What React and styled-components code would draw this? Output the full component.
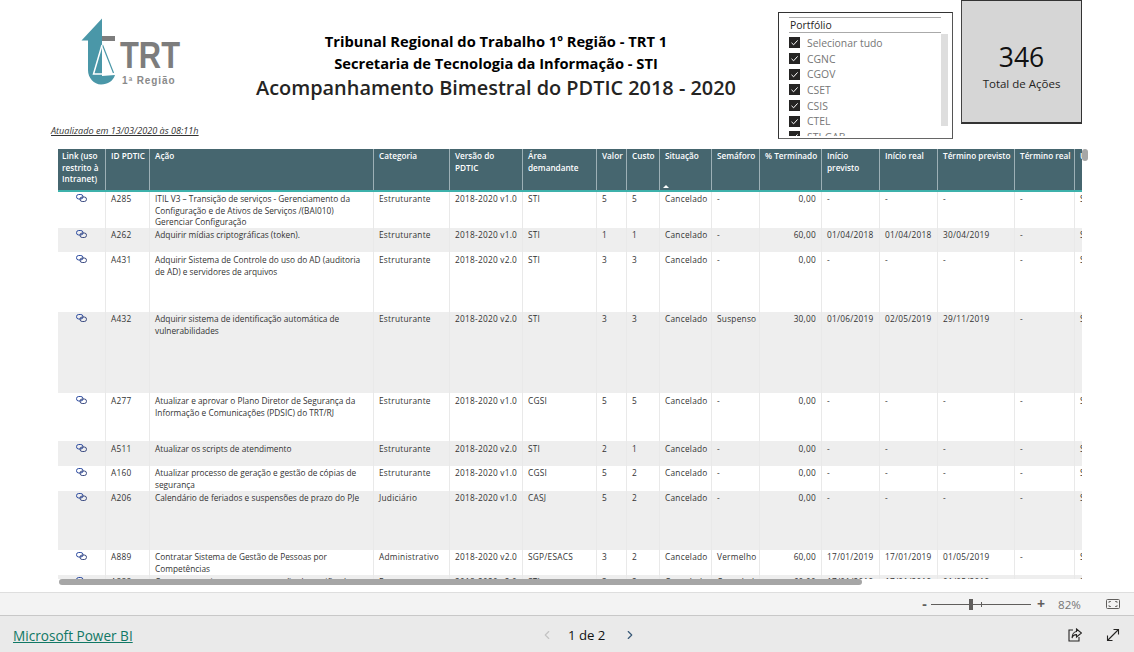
import React from "react";
import styled, { createGlobalStyle } from "styled-components";
import { ChevronLeft, ChevronRight } from "lucide-react";

const FONT = `"Open Sans", "Noto Sans", "Liberation Sans", sans-serif`;
const COLUMNS = "48px 44px 224px 76px 73px 74px 30px 33px 52px 48px 62px 58px 58px 77px 60px 7px";

const Global = createGlobalStyle`
  html, body { margin: 0; padding: 0; height: 100%; overflow: hidden; background: #fff; }
  body { font-family: ${FONT}; }
  * { box-sizing: border-box; }
`;

const Page = styled.div`
  width: 1134px;
  height: 652px;
  display: flex;
  flex-direction: column;
`;
const Report = styled.main`
  position: relative;
  height: 592px;
  flex: none;
`;
const TopRow = styled.header`
  display: flex;
  align-items: flex-start;
  height: 149px;
  padding-left: 51px;
`;
const LeftColumn = styled.div`
  width: 727px;
  flex: none;
`;
const Brand = styled.div`
  display: flex;
  align-items: flex-start;
  height: 124px;
  padding: 18px 0 0 29px;
`;
const LogoBox = styled.svg`
  width: 102px;
  height: 68px;
  flex: none;
`;
const Titles = styled.div`
  width: 480px;
  margin: 12px 0 0 74px;
  text-align: center;
`;
const TitleLine = styled.div`
  font-size: 14.7px;
  line-height: 22px;
  font-weight: 700;
  color: #000;
  white-space: nowrap;
`;
const MainTitle = styled.h1`
  margin: 0;
  font-size: 19.9px;
  line-height: 28px;
  font-weight: 600;
  color: #252423;
  white-space: nowrap;
`;
const Updated = styled.div`
  font-size: 9.1px;
  line-height: 14px;
  font-style: italic;
  color: #333;
  text-decoration: underline;
`;
const Slicer = styled.section`
  position: relative;
  width: 175px;
  height: 127px;
  margin-top: 12px;
  flex: none;
  border: 1px solid #333;
  border-bottom-color: #666;
  border-right-color: #555;
  padding: 4px 11px 0 10px;
  overflow: hidden;
`;
const SlicerTitle = styled.div`
  border-top: 1px solid #aaa;
  border-bottom: 1px solid #aaa;
  height: 16px;
  font-size: 10.4px;
  line-height: 14px;
  color: #252423;
  padding-left: 1px;
`;
const SlicerList = styled.ul`
  list-style: none;
  margin: 2px 0 0;
  padding: 0;
  height: 101px;
  overflow: hidden;
`;
const SlicerItem = styled.li`
  display: flex;
  align-items: center;
  gap: 7px;
  height: 15.7px;
  font-size: 10.4px;
  color: #767676;
  white-space: nowrap;
`;
const Check = styled.svg`
  width: 11px;
  height: 11px;
  flex: none;
`;
const SlicerScroll = styled.div`
  position: absolute;
  top: 21px;
  right: 4px;
  width: 7px;
  height: 92px;
  background: #dedede;
`;
const Card = styled.section`
  width: 121px;
  height: 124px;
  margin-left: 8px;
  flex: none;
  background: #d6d6d6;
  border: 1px solid #333;
  border-bottom-width: 2px;
  border-left-color: #444;
  display: flex;
  flex-direction: column;
  align-items: center;
  justify-content: center;
  padding-top: 8px;
`;
const CardValue = styled.div`
  font-size: 26.5px;
  line-height: 36px;
  color: #111;
`;
const CardLabel = styled.div`
  font-size: 11.5px;
  line-height: 18px;
  color: #252423;
`;
const TableWrap = styled.div`
  margin-left: 58px;
  width: 1024px;
  height: 430px;
  overflow: hidden;
`;
const Row = styled.div`
  display: grid;
  grid-template-columns: ${COLUMNS};
  height: ${(p) => p.$h}px;
  background: ${(p) => (p.$alt ? "#eeeeee" : "#ffffff")};
  && > * { padding-top: ${(p) => p.$pad}px; }
`;
const HeadRow = styled(Row)`
  background: #46666f;
  border-bottom: 2px solid #3db1ab;
`;
const HeadCell = styled.div`
  position: relative;
  padding: 1px 0 0 5px;
  border-right: 1px solid #9db0b6;
  font-size: 8.2px;
  line-height: 11.5px;
  font-weight: 600;
  color: #fff;
  overflow: hidden;
  white-space: pre-line;
  &:first-child { padding-left: 4px; }
  &:last-child { border-right: 0; }
`;
const SortMark = styled.span`
  position: absolute;
  left: 3px;
  bottom: 2px;
  border-left: 3px solid transparent;
  border-right: 3px solid transparent;
  border-bottom: 3px solid #fff;
`;
const Cell = styled.div`
  padding: 1px 5px 0 5px;
  border-right: 1px solid #e9e9e9;
  font-size: 8.3px;
  line-height: 11.7px;
  color: #333;
  overflow: hidden;
  letter-spacing: ${(p) => (p.$text ? "0" : "0.25px")};
  text-align: ${(p) => (p.$right ? "right" : "left")};
  white-space: ${(p) => (p.$nowrap ? "nowrap" : "normal")};
  &:last-child { border-right: 0; }
`;
const LinkCell = styled(Cell)`
  display: flex;
  justify-content: center;
  padding: 1px 0 0 0;
`;
const LinkIcon = styled.svg`
  width: 11px;
  height: 8px;
  margin-top: 1px;
`;
const HScroll = styled.div`
  position: absolute;
  left: 59px;
  top: 579px;
  width: 803px;
  height: 6px;
  border-radius: 3px;
  background: #a6a6a6;
`;
const VScroll = styled.div`
  position: absolute;
  left: 1082px;
  top: 149px;
  width: 6px;
  height: 12px;
  border-radius: 3px;
  background: #a6a6a6;
`;
const ZoomBar = styled.div`
  height: 24px;
  flex: none;
  background: #f3f3f3;
  border-top: 1px solid #dedede;
  border-bottom: 1px solid #c8c8c8;
  display: flex;
  align-items: center;
  padding-left: 921px;
`;
const ZoomSign = styled.span`
  width: ${(p) => p.$w}px;
  font-size: 14px;
  line-height: 14px;
  font-weight: 700;
  color: #605e5c;
  text-align: center;
`;
const Slider = styled.div`
  position: relative;
  width: 100px;
  height: 1px;
  margin: 0 3px 0 3px;
  background: #605e5c;
`;
const SliderThumb = styled.span`
  position: absolute;
  left: 38px;
  top: -5px;
  width: 4px;
  height: 11px;
  background: #605e5c;
`;
const SliderTick = styled.span`
  position: absolute;
  left: 50px;
  top: -2px;
  width: 1px;
  height: 5px;
  background: #605e5c;
`;
const ZoomValue = styled.span`
  margin-left: 10px;
  width: 24px;
  font-size: 11.6px;
  color: #767676;
`;
const FitIcon = styled.svg`
  width: 14px;
  height: 10px;
  margin-left: 24px;
`;
const Footer = styled.footer`
  flex: 1;
  background: #eaeaea;
  display: flex;
  align-items: center;
  padding: 2px 14px 0 13px;
`;
const BrandLink = styled.a`
  width: 527px;
  font-size: 13.6px;
  color: #117865;
  text-decoration: underline;
  flex: none;
`;
const Pager = styled.div`
  display: flex;
  align-items: center;
  font-size: 13.2px;
  font-weight: 400;
  color: #111;
  gap: 14px;
  & > svg:last-child { margin-left: 4px; }
`;
const FooterIcons = styled.div`
  margin-left: auto;
  display: flex;
  align-items: center;
  gap: 24px;
`;
const FootIcon = styled.svg`
  width: 14px;
  height: 14px;
`;

const HEADERS = [
  "Link (uso\nrestrito à\nIntranet)", "ID PDTIC", "Ação", "Categoria", "Versão do\nPDTIC", "Área\ndemandante",
  "Valor", "Custo", "Situação", "Semáforo", "% Terminado", "Início\nprevisto", "Início real",
  "Término previsto", "Término real", "U",
];

const ROWS = [
  [36, 1, "A285", "ITIL V3 – Transição de serviços - Gerenciamento da Configuração e de Ativos de Serviços /(BAI010) Gerenciar Configuração", "Estruturante", "2018-2020 v1.0", "STI", "5", "5", "-", "0,00", "-", "-", "-"],
  [24, 1, "A262", "Adquirir mídias criptográficas (token).", "Estruturante", "2018-2020 v1.0", "STI", "1", "1", "-", "60,00", "01/04/2018", "01/04/2018", "30/04/2019"],
  [60, 2, "A431", "Adquirir Sistema de Controle do uso do AD (auditoria de AD) e servidores de arquivos", "Estruturante", "2018-2020 v2.0", "STI", "3", "3", "-", "0,00", "-", "-", "-"],
  [81, 1, "A432", "Adquirir sistema de identificação automática de vulnerabilidades", "Estruturante", "2018-2020 v2.0", "STI", "3", "3", "Suspenso", "30,00", "01/06/2019", "02/05/2019", "29/11/2019"],
  [48, 2, "A277", "Atualizar e aprovar o Plano Diretor de Segurança da Informação e Comunicações (PDSIC) do TRT/RJ", "Estruturante", "2018-2020 v1.0", "CGSI", "5", "5", "-", "0,00", "-", "-", "-"],
  [25, 2, "A511", "Atualizar os scripts de atendimento", "Estruturante", "2018-2020 v2.0", "STI", "2", "1", "-", "0,00", "-", "-", "-"],
  [25, 1, "A160", "Atualizar processo de geração e gestão de cópias de segurança", "Estruturante", "2018-2020 v1.0", "CGSI", "5", "2", "-", "0,00", "-", "-", "-"],
  [59, 1, "A206", "Calendário de feriados e suspensões de prazo do PJe", "Judiciário", "2018-2020 v1.0", "CASJ", "5", "2", "-", "0,00", "-", "-", "-"],
  [25, 1, "A889", "Contratar Sistema de Gestão de Pessoas por Competências", "Administrativo", "2018-2020 v2.0", "SGP/ESACS", "3", "2", "Vermelho", "60,00", "17/01/2019", "17/01/2019", "01/05/2019"],
  [25, 1, "A888", "Contratar serviços para manutenção de certificados digitais", "Estruturante", "2018-2020 v2.0", "STI", "3", "2", "Cancelado", "60,00", "17/01/2019", "17/01/2019", "01/05/2019"],
];

const PORTFOLIO = ["Selecionar tudo", "CGNC", "CGOV", "CSET", "CSIS", "CTEL", "STI-GAB"];

function Logo() {
  return (
    <LogoBox viewBox="0 0 102 68" aria-label="TRT 1ª Região">
      <path d="M22 0.5 L1.5 22.5 L8 22.5 L8 52 C8 60 14 66.5 21 66.5 C28 66.5 33 63 35 57 L22 58 Z" fill="#4a97a8" />
      <rect x="22" y="18" width="13" height="5" fill="#7d7d7d" />
      <path d="M22.5 27 L33.5 55" fill="none" stroke="#4a97a8" strokeWidth="1.2" />
      <path d="M22 27 L13.5 56 L34 56" fill="none" stroke="#ffffff" strokeWidth="1.5" />
      <text x="40" y="50" fontFamily="Liberation Sans, sans-serif" fontWeight="700" fontSize="36" textLength="60" lengthAdjust="spacingAndGlyphs" fill="#7d7d7d">TRT</text>
      <text x="42" y="66" fontFamily="Liberation Sans, sans-serif" fontWeight="700" fontSize="10" letterSpacing="0.9" fill="#8a8a8a">1ª Região</text>
    </LogoBox>
  );
}

function ChainIcon() {
  return (
    <LinkIcon viewBox="0 0 11 8">
      <rect x="0.5" y="0.5" width="6.5" height="4.5" rx="2.2" fill="none" stroke="#2b4aa0" strokeWidth="1" />
      <rect x="4" y="3" width="6.5" height="4.5" rx="2.2" fill="none" stroke="#3a4a80" strokeWidth="1" />
    </LinkIcon>
  );
}

export default function App() {
  return (
    <Page>
      <Global />
      <Report>
        <TopRow>
          <LeftColumn>
            <Brand>
              <Logo />
              <Titles>
                <TitleLine>Tribunal Regional do Trabalho 1º Região - TRT 1</TitleLine>
                <TitleLine>Secretaria de Tecnologia da Informação - STI</TitleLine>
                <MainTitle>Acompanhamento Bimestral do PDTIC 2018 - 2020</MainTitle>
              </Titles>
            </Brand>
            <Updated>Atualizado em 13/03/2020 às 08:11h</Updated>
          </LeftColumn>
          <Slicer>
            <SlicerTitle>Portfólio</SlicerTitle>
            <SlicerList>
              {PORTFOLIO.map((p) => (
                <SlicerItem key={p}>
                  <Check viewBox="0 0 11 11">
                    <rect width="11" height="11" fill="#252423" />
                    <path d="M2.5 5.8 L4.6 7.8 L8.6 3.4" fill="none" stroke="#fff" strokeWidth="1" />
                  </Check>
                  {p}
                </SlicerItem>
              ))}
            </SlicerList>
            <SlicerScroll />
          </Slicer>
          <Card>
            <CardValue>346</CardValue>
            <CardLabel>Total de Ações</CardLabel>
          </Card>
        </TopRow>
        <TableWrap>
          <HeadRow $h={43} $pad={1}>
            {HEADERS.map((h) => (
              <HeadCell key={h}>
                {h}
                {h === "Situação" && <SortMark />}
              </HeadCell>
            ))}
          </HeadRow>
          {ROWS.map(([h, pad, id, acao, cat, ver, area, val, cus, sem, pct, ini, real, fim], i) => (
            <Row key={id} $h={h} $pad={pad} $alt={i % 2 === 1}>
              <LinkCell><ChainIcon /></LinkCell>
              <Cell>{id}</Cell>
              <Cell $text>{acao}</Cell>
              <Cell>{cat}</Cell>
              <Cell $nowrap>{ver}</Cell>
              <Cell>{area}</Cell>
              <Cell>{val}</Cell>
              <Cell>{cus}</Cell>
              <Cell>Cancelado</Cell>
              <Cell>{sem}</Cell>
              <Cell $right>{pct}</Cell>
              <Cell $nowrap>{ini}</Cell>
              <Cell $nowrap>{real}</Cell>
              <Cell $nowrap>{fim}</Cell>
              <Cell>-</Cell>
              <Cell $nowrap>Sim</Cell>
            </Row>
          ))}
        </TableWrap>
        <HScroll />
        <VScroll />
      </Report>
      <ZoomBar>
        <ZoomSign $w={7}>-</ZoomSign>
        <Slider>
          <SliderThumb />
          <SliderTick />
        </Slider>
        <ZoomSign $w={14}>+</ZoomSign>
        <ZoomValue>82%</ZoomValue>
        <FitIcon viewBox="0 0 14 10">
          <rect x="0.5" y="0.5" width="13" height="9" rx="1" fill="none" stroke="#605e5c" />
          <path d="M3 4 V2.5 H5 M9 2.5 H11 V4 M11 6 V7.5 H9 M5 7.5 H3 V6" fill="none" stroke="#605e5c" strokeWidth="0.8" />
        </FitIcon>
      </ZoomBar>
      <Footer>
        <BrandLink>Microsoft Power BI</BrandLink>
        <Pager>
          <ChevronLeft size={14} color="#c4c4c4" />
          <span>1 de 2</span>
          <ChevronRight size={14} color="#3a5a78" />
        </Pager>
        <FooterIcons>
          <FootIcon viewBox="0 0 14 14">
            <path d="M5 2 H1 V13 H11 V9" fill="none" stroke="#252423" strokeWidth="1.1" />
            <path d="M8.5 1 L13.5 5 L8.5 9 V6.6 C6 6.6 4.5 8 4 10 C4 6.5 6 3.8 8.5 3.5 Z" fill="none" stroke="#252423" strokeWidth="1.1" />
          </FootIcon>
          <FootIcon viewBox="0 0 14 14">
            <path d="M1.5 12.5 L12.5 1.5 M7.5 1.5 H12.5 V6.5 M1.5 7.5 V12.5 H6.5" fill="none" stroke="#252423" strokeWidth="1.1" />
          </FootIcon>
        </FooterIcons>
      </Footer>
    </Page>
  );
}
